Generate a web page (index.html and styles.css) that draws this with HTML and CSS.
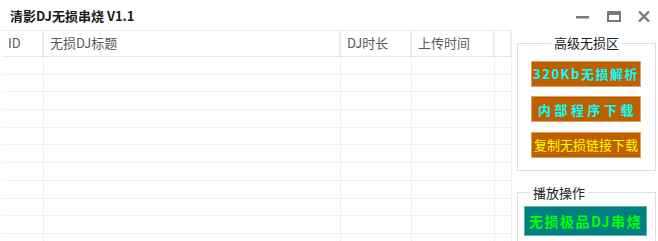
FILE: index.html
```html
<!DOCTYPE html>
<html lang="zh-CN">
<head>
<meta charset="UTF-8" />
<title>清影DJ无损串烧 V1.1</title>
<link rel="stylesheet" href="styles.css">
</head>
<body>
<div class="titlebar">
  <span class="title">清影DJ无损串烧 V1.1</span>
  <div class="controls">
    <svg width="14" height="14" viewBox="0 0 14 14"><rect x="0" y="6" width="13" height="2.5" fill="#7a7a7a"/></svg>
    <svg width="14" height="14" viewBox="0 0 14 14"><rect x="1" y="2" width="12" height="9" fill="none" stroke="#7a7a7a" stroke-width="2"/><rect x="1" y="2" width="12" height="3" fill="#7a7a7a"/></svg>
    <svg width="14" height="14" viewBox="0 0 14 14"><path d="M2 1.5 L12 11.5 M12 1.5 L2 11.5" stroke="#7a7a7a" stroke-width="2.4"/></svg>
  </div>
</div>

<div class="main">
  <div class="grid" id="grid">
    <div class="row head">
      <div class="cell">ID</div>
      <div class="cell">无损DJ标题</div>
      <div class="cell">DJ时长</div>
      <div class="cell">上传时间</div>
      <div class="cell"></div>
    </div>
  </div>

  <div class="side">
    <fieldset class="group advanced">
      <legend>高级无损区</legend>
      <button class="btn orange cyan">320Kb无损解析</button>
      <button class="btn orange cyan wide">内部程序下载</button>
      <button class="btn orange yellow">复制无损链接下载</button>
    </fieldset>
    <fieldset class="group play">
      <legend>播放操作</legend>
      <button class="btn teal">无损极品DJ串烧</button>
    </fieldset>
  </div>
</div>

<script>
const grid = document.getElementById('grid');
for (let i = 0; i < 11; i++) {
  grid.insertAdjacentHTML('beforeend',
    '<div class="row"><div class="cell"></div><div class="cell"></div><div class="cell"></div><div class="cell"></div><div class="cell"></div></div>');
}
</script>
</body>
</html>
```

FILE: styles.css
```css
* { box-sizing: border-box; }
body { margin: 0; width: 658px; height: 241px; overflow: hidden; background: #fff; font-family: "Noto Sans CJK SC", "Noto Sans", sans-serif; color: #333; }

.titlebar { height: 30px; display: flex; align-items: center; padding-left: 10px; }
.title { font-size: 13px; font-weight: 700; color: #1a1a1a; }
.controls { margin-left: auto; display: flex; align-items: center; gap: 16px; padding-right: 7px; margin-top: 3px; }
.controls svg:first-child { margin-right: 1px; }

.main { display: flex; align-items: flex-start; padding-left: 2px; }

.grid { width: 510px; border-top: 1px solid #ececec; flex-shrink: 0; }
.row { display: grid; grid-template-columns: 42px 297px 71px 83px 17px; height: 17.7px; border-bottom: 1px solid #f0f0f0; }
.row .cell { border-right: 1px solid #f0f0f0; }
.head { height: 26px; border-bottom: 1px solid #e6e6e6; }
.head .cell { border-right: 2px solid #ededed; font-size: 13px; color: #5a5a5a; padding-left: 6px; line-height: 24px; }

.side { margin-left: 5px; width: 139px; padding-top: 5px; }
.group { margin: 0; border: 1px solid #dedede; min-width: 0; }
.group legend { font-size: 13px; color: #222; line-height: 16px; padding: 0 3px; }

.advanced { padding: 0 13px 12px; }
.advanced legend { margin: 0 auto; }
.play { margin-top: 14px; padding: 0 6px 10px; }
.play legend { margin-left: 6px; }

.btn { display: flex; align-items: center; justify-content: center; width: 110px; height: 26px; margin: 0; padding: 0; font-family: "Noto Sans CJK SC", sans-serif; font-size: 13px; white-space: nowrap; }
.advanced .btn { margin-top: 9.5px; }
.orange { background: #c05f00; border: 1px solid #d9a070; }
.cyan { color: #00ffff; font-weight: 700; letter-spacing: 1.5px; }
.cyan.wide { letter-spacing: 3.5px; padding-left: 3px; }
.yellow { color: #ffff00; }
.teal { width: 123px; height: 30px; margin-top: 5px; background: #008080; border: 1px solid #5fb0b0; color: #00ff00; font-weight: 700; font-size: 14px; letter-spacing: 1.5px; }
```
